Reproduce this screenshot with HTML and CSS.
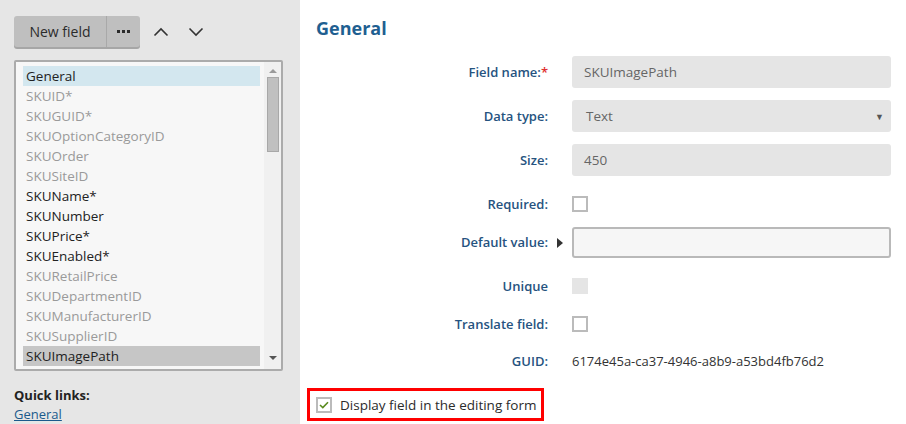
FILE: index.html
```html
<!DOCTYPE html>
<html>
<head>
<meta charset="utf-8">
<link rel="stylesheet" href="styles.css">
</head>
<body>
<div class="page">
  <aside class="side">
    <div class="toolbar">
      <div class="btn-group">
        <span class="btn btn-main">New field</span>
        <span class="btn btn-more"><i class="dot"></i><i class="dot"></i><i class="dot"></i></span>
      </div>
      <span class="arrow-btn up-btn">
        <svg width="16" height="10" viewBox="0 0 16 10"><path d="M1.5 8.5 L8 2 L14.5 8.5" fill="none" stroke="#333" stroke-width="1.6"/></svg>
      </span>
      <span class="arrow-btn">
        <svg width="16" height="10" viewBox="0 0 16 10"><path d="M1.5 1.5 L8 8 L14.5 1.5" fill="none" stroke="#333" stroke-width="1.6"/></svg>
      </span>
    </div>
    <div class="listbox">
      <ul class="items">
        <li class="item sel-blue">General</li>
        <li class="item dim">SKUID*</li>
        <li class="item dim">SKUGUID*</li>
        <li class="item dim">SKUOptionCategoryID</li>
        <li class="item dim">SKUOrder</li>
        <li class="item dim">SKUSiteID</li>
        <li class="item">SKUName*</li>
        <li class="item">SKUNumber</li>
        <li class="item">SKUPrice*</li>
        <li class="item">SKUEnabled*</li>
        <li class="item dim">SKURetailPrice</li>
        <li class="item dim">SKUDepartmentID</li>
        <li class="item dim">SKUManufacturerID</li>
        <li class="item dim">SKUSupplierID</li>
        <li class="item sel-gray">SKUImagePath</li>
      </ul>
      <div class="scrollbar">
        <span class="sb-arrow up"></span>
        <span class="sb-thumb"></span>
        <span class="sb-fill"></span>
        <span class="sb-arrow down"></span>
      </div>
    </div>
    <div class="quick">
      <div class="quick-title">Quick links:</div>
      <a class="quick-link" href="#">General</a>
    </div>
  </aside>
  <main class="content">
    <h2 class="heading">General</h2>
    <div class="form">
      <div class="row first">
        <label class="lbl">Field name:<span class="req">*</span></label>
        <div class="field"><div class="input">SKUImagePath</div></div>
      </div>
      <div class="row">
        <label class="lbl">Data type:</label>
        <div class="field"><div class="input select"><span class="sel-text">Text</span><span class="caret">&#9660;</span></div></div>
      </div>
      <div class="row">
        <label class="lbl">Size:</label>
        <div class="field"><div class="input">450</div></div>
      </div>
      <div class="row">
        <label class="lbl">Required:</label>
        <div class="field"><span class="cb"></span></div>
      </div>
      <div class="row tight">
        <label class="lbl">Default value:</label>
        <div class="field"><span class="tri"></span><div class="input editable"></div></div>
      </div>
      <div class="row">
        <label class="lbl">Unique</label>
        <div class="field"><span class="cb disabled"></span></div>
      </div>
      <div class="row tight">
        <label class="lbl">Translate field:</label>
        <div class="field"><span class="cb"></span></div>
      </div>
      <div class="row tighter">
        <label class="lbl">GUID:</label>
        <div class="field"><span class="guid">6174e45a-ca37-4946-a8b9-a53bd4fb76d2</span></div>
      </div>
    </div>
    <div class="highlight">
      <span class="cb checked">
        <svg width="10" height="8" viewBox="0 0 10 8"><path d="M1 4 L3.8 6.6 L9 1.2" fill="none" stroke="#5a8a1e" stroke-width="1.6"/></svg>
      </span>
      <span class="hl-text">Display field in the editing form</span>
    </div>
  </main>
</div>
</body>
</html>
```

FILE: styles.css
```css
* { box-sizing: border-box; }
html, body { margin: 0; padding: 0; }
body {
  width: 906px;
  height: 424px;
  overflow: hidden;
  font-family: "Open Sans", "Noto Sans", sans-serif;
  font-size: 13px;
  color: #333;
  background: #fff;
}
.page {
  display: flex;
  height: 424px;
}
.side {
  width: 300px;
  flex: none;
  background: #e6e6e6;
  padding: 16px 0 0 14px;
}
.toolbar {
  display: flex;
  align-items: center;
  height: 31px;
}
.btn-group {
  display: flex;
  height: 31px;
  background: #bfbfbf;
  border-radius: 3px;
  box-shadow: 0 2px 0 #a6a6a6;
}
.btn {
  display: flex;
  align-items: center;
  justify-content: center;
  height: 31px;
  color: #2b2b2b;
  font-size: 14px;
}
.btn-main {
  width: 93px;
  border-right: 1px solid #a9a9a9;
}
.btn-more {
  width: 33px;
  gap: 2px;
}
.dot {
  display: block;
  width: 3px;
  height: 3px;
  background: #2b2b2b;
}
.arrow-btn {
  display: flex;
  align-items: center;
  justify-content: center;
  width: 35px;
  height: 31px;
}
.up-btn { margin-left: 3px; }
.listbox {
  margin-top: 13px;
  width: 269px;
  height: 311px;
  border: 2px solid #ababab;
  border-radius: 2px;
  background: #f7f7f7;
  display: flex;
  padding: 4px 0 0 7px;
}
.items {
  list-style: none;
  margin: 0;
  padding: 0;
  width: 237px;
}
.item {
  height: 20px;
  line-height: 20px;
  padding-left: 3px;
  color: #222;
  white-space: nowrap;
  font-size: 13.5px;
}
.item.dim { color: #9a9a9a; }
.item.sel-blue { background: #d3e7ef; }
.item.sel-gray { background: #c6c6c6; }
.scrollbar {
  margin-left: 4px;
  margin-top: -4px;
  width: 17px;
  height: 307px;
  background: #f0f0f0;
  display: flex;
  flex-direction: column;
  align-items: center;
}
.sb-arrow {
  width: 0;
  height: 0;
  border-left: 4px solid transparent;
  border-right: 4px solid transparent;
}
.sb-arrow.up {
  margin-top: 7px;
  border-bottom: 4px solid #9a9a9a;
}
.sb-arrow.down {
  margin-bottom: 9px;
  border-top: 4px solid #555;
}
.sb-thumb {
  margin-top: 4px;
  width: 12px;
  height: 75px;
  background: #c0c0c0;
  border: 1px solid #a8a8a8;
}
.sb-fill { flex: 1; }
.quick {
  margin-top: 15px;
}
.quick-title {
  font-weight: 700;
  color: #222;
  line-height: 18px;
}
.quick-link {
  display: inline-block;
  color: #1a5a8c;
  text-decoration: underline;
  line-height: 20px;
}
.content {
  flex: 1;
  padding: 0 0 0 7px;
}
.heading {
  margin: 16px 0 0 9px;
  font-size: 18px;
  font-weight: 700;
  color: #1f5f91;
  line-height: 24px;
}
.form {
  display: flex;
  flex-direction: column;
  margin-top: 16px;
}
.row {
  display: flex;
  align-items: center;
  height: 32px;
  margin-top: 12px;
}
.row.first { margin-top: 0; }
.row.tight { margin-top: 6px; }
.row.tighter { margin-top: 5px; }
.lbl {
  width: 241px;
  text-align: right;
  color: #26537f;
  font-weight: 600;
}
.req { color: #e03030; }
.field {
  display: flex;
  align-items: center;
  margin-left: 24px;
  position: relative;
}
.input {
  width: 319px;
  height: 32px;
  border-radius: 3px;
  background: #e5e5e5;
  color: #666;
  display: flex;
  align-items: center;
  padding-left: 12px;
  font-size: 13.5px;
}
.select { justify-content: space-between; padding-right: 7px; padding-left: 14px; }
.caret { font-size: 9px; color: #555; }
.input.editable {
  background: #f6f6f6;
  border: 2px solid #b9b9b9;
  height: 31px;
}
.tri {
  position: absolute;
  left: -15px;
  top: 11px;
  width: 0;
  height: 0;
  border-top: 5px solid transparent;
  border-bottom: 5px solid transparent;
  border-left: 6px solid #333;
}
.cb {
  display: inline-flex;
  align-items: center;
  justify-content: center;
  width: 16px;
  height: 16px;
  border: 2px solid #bbb;
  background: #fff;
}
.cb.disabled {
  border-color: #e5e5e5;
  background: #e5e5e5;
}
.guid { color: #333; }
.highlight {
  margin-top: 11px;
  width: 237px;
  height: 33px;
  border: 3px solid #f00;
  display: flex;
  align-items: center;
  padding-left: 6px;
}
.hl-text {
  margin-left: 8px;
  color: #2b2b2b;
  font-size: 13.5px;
}
```
